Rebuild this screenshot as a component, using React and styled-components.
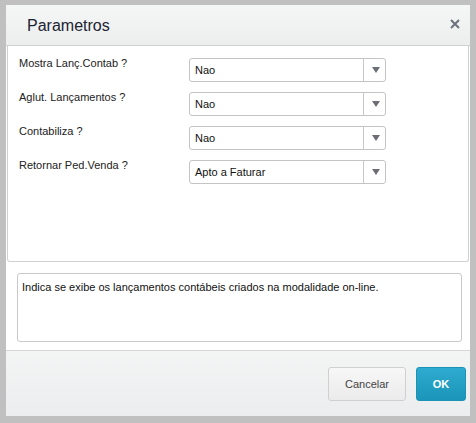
import React from 'react'
import styled, { createGlobalStyle } from 'styled-components'

const params = [
  { label: 'Mostra Lanç.Contab ?', value: 'Nao' },
  { label: 'Aglut. Lançamentos ?', value: 'Nao' },
  { label: 'Contabiliza ?', value: 'Nao' },
  { label: 'Retornar Ped.Venda ?', value: 'Apto a Faturar' },
]

const App = () => (
  <>
    <GlobalStyle />
    <Dialog>
      <Header>
        <Title>Parametros</Title>
        <CloseButton aria-label="Fechar">
          <svg width="10" height="10" viewBox="0 0 10 10">
            <path d="M1 1 L9 9 M9 1 L1 9" stroke="#6c727c" strokeWidth="2" />
          </svg>
        </CloseButton>
      </Header>

      <ParamPanel>
        {params.map((p) => (
          <Row key={p.label}>
            <Label>{p.label}</Label>
            <Select>
              <SelectValue>{p.value}</SelectValue>
              <ArrowBox>
                <Arrow />
              </ArrowBox>
            </Select>
          </Row>
        ))}
      </ParamPanel>

      <DescSection>
        <Description>
          Indica se exibe os lançamentos contábeis criados na modalidade on-line.
        </Description>
      </DescSection>

      <Footer>
        <Button>Cancelar</Button>
        <Button primary>OK</Button>
      </Footer>
    </Dialog>
  </>
)

const GlobalStyle = createGlobalStyle`
  html, body {
    margin: 0;
    padding: 0;
    background: #c0c0c0;
  }
  body {
    font-family: "Liberation Sans", Arial, sans-serif;
    font-size: 11px;
  }
`

const Dialog = styled.div`
  width: 464px;
  height: 411px;
  margin: 5px 6px 7px 6px;
  background: #fff;
  display: flex;
  flex-direction: column;
`

const Header = styled.div`
  height: 41px;
  flex: none;
  box-sizing: border-box;
  display: flex;
  align-items: center;
  justify-content: space-between;
  padding: 0 10px 0 21px;
  background: linear-gradient(#f5f6f6, #eceded);
  border-bottom: 1px solid #cfd0d0;
`

const Title = styled.h1`
  margin: 0;
  font-size: 16px;
  font-weight: normal;
  color: #1b2433;
  padding-top: 2px;
`

const CloseButton = styled.button`
  border: none;
  background: none;
  padding: 0;
  width: 10px;
  height: 10px;
  display: flex;
  margin-bottom: 3px;
`

const ParamPanel = styled.div`
  height: 216px;
  flex: none;
  box-sizing: border-box;
  margin: 0 1px;
  padding: 10px 11px 0;
  border: 1px solid #cfd0d0;
  border-top: none;
  border-radius: 0 0 3px 3px;
  display: flex;
  flex-direction: column;
  gap: 8px;
  background: #fff;
`

const Row = styled.div`
  display: flex;
  align-items: flex-start;
`

const Label = styled.div`
  width: 170px;
  line-height: 14px;
  color: #222;
`

const Select = styled.div`
  width: 197px;
  height: 24px;
  margin-top: 2px;
  box-sizing: border-box;
  border: 1px solid #c4c4c4;
  border-radius: 3px;
  display: flex;
  align-items: stretch;
  background: #fff;
`

const SelectValue = styled.div`
  flex: 1;
  display: flex;
  align-items: center;
  padding-left: 5px;
  color: #111;
`

const ArrowBox = styled.div`
  width: 21px;
  border-left: 1px solid #c9c9c9;
  display: flex;
  align-items: center;
  justify-content: center;
`

const Arrow = styled.div`
  width: 0;
  height: 0;
  border-left: 4px solid transparent;
  border-right: 4px solid transparent;
  border-top: 6px solid #6b6e74;
  margin-left: 2px;
`

const DescSection = styled.div`
  flex: none;
  padding: 11px 8px 8px 11px;
  border-bottom: 1px solid #d6d7d7;
`

const Description = styled.div`
  height: 69px;
  box-sizing: border-box;
  border: 1px solid #c9c9c9;
  border-radius: 3px;
  padding: 6px 4px;
  line-height: 14px;
  color: #111;
`

const Footer = styled.div`
  flex: 1;
  display: flex;
  justify-content: flex-end;
  align-items: flex-start;
  gap: 10px;
  padding: 16px 4px 0 0;
  background: linear-gradient(#f3f4f4, #ecedee);
`

const Button = styled.button`
  height: 34px;
  width: ${({ primary }) => (primary ? '50px' : '78px')};
  border-radius: 3px;
  font-family: "Liberation Sans", Arial, sans-serif;
  font-size: 11px;
  font-weight: ${({ primary }) => (primary ? 'bold' : 'normal')};
  color: ${({ primary }) => (primary ? '#fff' : '#444')};
  border: 1px solid ${({ primary }) => (primary ? '#1a93b6' : '#d0d0d0')};
  background: ${({ primary }) =>
    primary
      ? 'linear-gradient(#2eabd0, #1b95ba)'
      : 'linear-gradient(#f7f7f7, #ebebeb)'};
`

export default App
